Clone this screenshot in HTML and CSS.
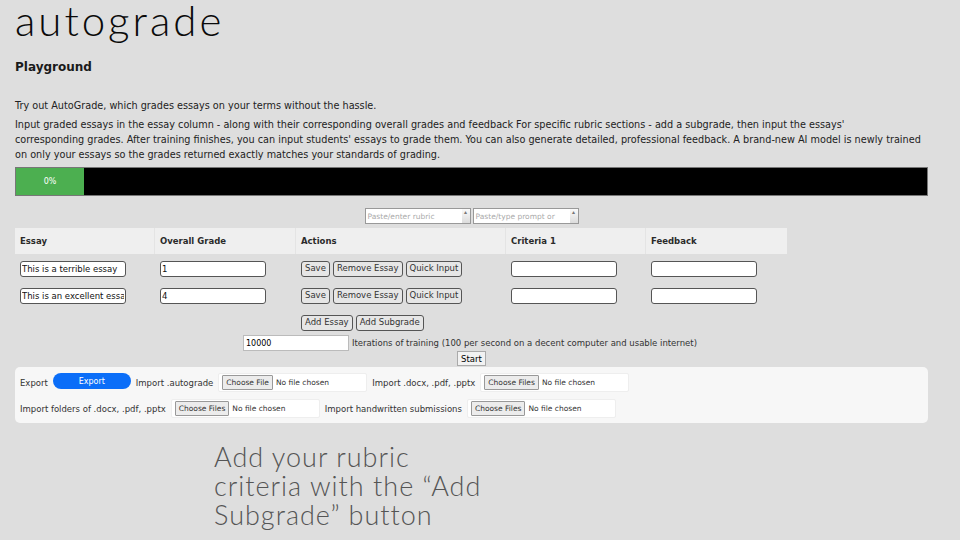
FILE: index.html
```html
<!DOCTYPE html>
<html lang="en">
<head>
  <meta charset="UTF-8" />
  <title>autograde</title>
  <link rel="stylesheet" href="styles.css">
</head>
<body>
  <div class="page">
    <h1 class="title">autograde</h1>
    <h2 class="subtitle">Playground</h2>
    <p class="intro">Try out AutoGrade, which grades essays on your terms without the hassle.</p>
    <p class="desc">Input graded essays in the essay column - along with their corresponding overall grades and feedback For specific rubric sections - add a subgrade, then input the essays'<br>corresponding grades. After training finishes, you can input students' essays to grade them. You can also generate detailed, professional feedback. A brand-new AI model is newly trained<br>on only your essays so the grades returned exactly matches your standards of grading.</p>

    <div class="progress">
      <div class="progress-fill">0%</div>
    </div>

    <div class="prompts">
      <div class="fake-area"><span class="ph">Paste/enter rubric</span><span class="scroll">&#9652;</span></div>
      <div class="fake-area"><span class="ph">Paste/type prompt or</span><span class="scroll">&#9652;</span></div>
    </div>

    <div class="grid">
      <div class="th">Essay</div>
      <div class="th">Overall Grade</div>
      <div class="th">Actions</div>
      <div class="th">Criteria 1</div>
      <div class="th">Feedback</div>

      <div class="td"><input class="field" value="This is a terrible essay"></div>
      <div class="td"><input class="field" value="1"></div>
      <div class="td"><button class="btn">Save</button><button class="btn">Remove Essay</button><button class="btn">Quick Input</button></div>
      <div class="td"><input class="field"></div>
      <div class="td"><input class="field"></div>

      <div class="td"><input class="field" value="This is an excellent essay"></div>
      <div class="td"><input class="field" value="4"></div>
      <div class="td"><button class="btn">Save</button><button class="btn">Remove Essay</button><button class="btn">Quick Input</button></div>
      <div class="td"><input class="field"></div>
      <div class="td"><input class="field"></div>

      <div class="td"></div>
      <div class="td"></div>
      <div class="td"><button class="btn">Add Essay</button><button class="btn">Add Subgrade</button></div>
    </div>

    <div class="iter">
      <input class="iter-input" value="10000">
      <span>Iterations of training (100 per second on a decent computer and usable internet)</span>
    </div>
    <div class="start-row"><button class="start">Start</button></div>

    <div class="io-box">
      <div class="io-row">
        <span>Export</span>
        <button class="export">Export</button>
        <span>Import .autograde</span>
        <div class="file"><span class="choose">Choose File</span><span>No file chosen</span></div>
        <span>Import .docx, .pdf, .pptx</span>
        <div class="file"><span class="choose">Choose Files</span><span>No file chosen</span></div>
      </div>
      <div class="io-row">
        <span>Import folders of .docx, .pdf, .pptx</span>
        <div class="file"><span class="choose">Choose Files</span><span>No file chosen</span></div>
        <span>Import handwritten submissions</span>
        <div class="file"><span class="choose">Choose Files</span><span>No file chosen</span></div>
      </div>
    </div>
  </div>

  <p class="caption">Add your rubric<br>criteria with the &ldquo;Add<br>Subgrade&rdquo; button</p>
</body>
</html>
```

FILE: styles.css
```css
body {
  margin: 0;
  background-color: #dedede;
  font-family: 'DejaVu Sans', 'Noto Sans', sans-serif;
  color: #111;
  width: 960px;
  height: 540px;
  overflow: hidden;
}

.page {
  width: 913px;
  padding-left: 15px;
}

.title {
  margin: 0;
  height: 48px;
  font-family: 'Lato', sans-serif;
  font-size: 42px;
  font-weight: 300;
  line-height: 40px;
  letter-spacing: 3px;
  color: #0a0a0a;
}

.subtitle {
  margin: 10px 0 0;
  font-size: 12px;
  font-weight: 700;
  line-height: 18px;
  color: #1a1a1a;
}

.intro {
  margin: 22px 0 0;
  font-size: 9.7px;
  line-height: 15px;
  color: #222;
}

.desc {
  width: 940px;
  margin: 4px 0 0;
  font-size: 9.7px;
  line-height: 15px;
  color: #222;
  white-space: nowrap;
}

.progress {
  margin-top: 5px;
  height: 27px;
  background: #000;
  border: 1px solid #777;
  display: flex;
}

.progress-fill {
  width: 68px;
  background: #4caf50;
  color: #fff;
  font-size: 8px;
  display: flex;
  align-items: center;
  justify-content: center;
}

.prompts {
  display: flex;
  justify-content: center;
  gap: 2px;
  margin-top: 12px;
}

.fake-area {
  width: 106px;
  height: 16px;
  box-sizing: border-box;
  border: 1px solid #999;
  background: #fff;
  display: flex;
  font-size: 7.5px;
  color: #aaa;
}

.fake-area .ph {
  flex: 1;
  padding: 3px 0 0 2px;
  white-space: nowrap;
  overflow: hidden;
}

.fake-area .scroll {
  width: 8px;
  background: linear-gradient(#fafafa, #dcdcdc);
  font-size: 6px;
  line-height: 6px;
  color: #777;
  text-align: center;
}

.grid {
  margin-top: 4px;
  display: grid;
  grid-template-columns: 140px 141px 210px 140px 141px;
  grid-auto-rows: 27px;
}

.th {
  background: #efefef;
  border-right: 1px solid #e4e4e4;
  font-size: 8.5px;
  font-weight: 700;
  color: #2a2a2a;
  padding-left: 5px;
  display: flex;
  align-items: center;
  height: 26px;
}

.th:nth-child(5) { border-right: none; }

.td {
  padding-left: 5px;
  display: flex;
  align-items: center;
  gap: 3px;
}

.field {
  width: 106px;
  height: 16px;
  box-sizing: border-box;
  border: 1px solid #555;
  border-radius: 3px;
  padding: 0 1px;
  font-family: inherit;
  font-size: 8.5px;
  color: #111;
  background: #fff;
}

.btn {
  height: 16px;
  box-sizing: border-box;
  border: 1px solid #555;
  border-radius: 3px;
  background: #e6e6e6;
  padding: 0 3px;
  font-family: inherit;
  font-size: 8.5px;
  color: #333;
  line-height: 1;
}

.iter {
  display: flex;
  align-items: center;
  gap: 3px;
  margin-top: -1px;
  padding-left: 228px;
  font-size: 8.5px;
  color: #333;
}

.iter-input {
  width: 106px;
  height: 16px;
  box-sizing: border-box;
  border: 1px solid #bbb;
  background: #fff;
  font-family: inherit;
  font-size: 8px;
  padding: 0 2px;
}

.start-row {
  padding-left: 442px;
}

.start {
  display: block;
  height: 15px;
  width: 29px;
  box-sizing: border-box;
  border: 1px solid #aaa;
  background: #f2f2f2;
  font-family: inherit;
  font-size: 8.5px;
  padding: 0;
}

.io-box {
  margin-top: 1px;
  background: #f7f7f7;
  border-radius: 5px;
  padding: 6px 5px;
  height: 56px;
  box-sizing: border-box;
  display: flex;
  flex-direction: column;
  gap: 7px;
  font-size: 8.5px;
  color: #333;
}

.io-row {
  display: flex;
  align-items: center;
  gap: 5px;
}

.export {
  width: 78px;
  height: 16px;
  border: none;
  border-radius: 8px;
  background: #0b6ef8;
  color: #fff;
  font-family: inherit;
  font-size: 8px;
  margin-top: -3px;
}

.file {
  width: 149px;
  height: 19px;
  box-sizing: border-box;
  background: #fff;
  border: 1px solid #eee;
  border-radius: 2px;
  display: flex;
  align-items: center;
  gap: 3px;
  padding-left: 3px;
  font-size: 7.5px;
  color: #333;
}

.choose {
  background: #ececec;
  border: 1px solid #999;
  padding: 2px 3px;
  border-radius: 1px;
}

.caption {
  margin: 19px 0 0 214px;
  font-family: 'Lato', sans-serif;
  font-size: 27px;
  line-height: 29px;
  font-weight: 300;
  color: #555;
  letter-spacing: 1px;
}
```
